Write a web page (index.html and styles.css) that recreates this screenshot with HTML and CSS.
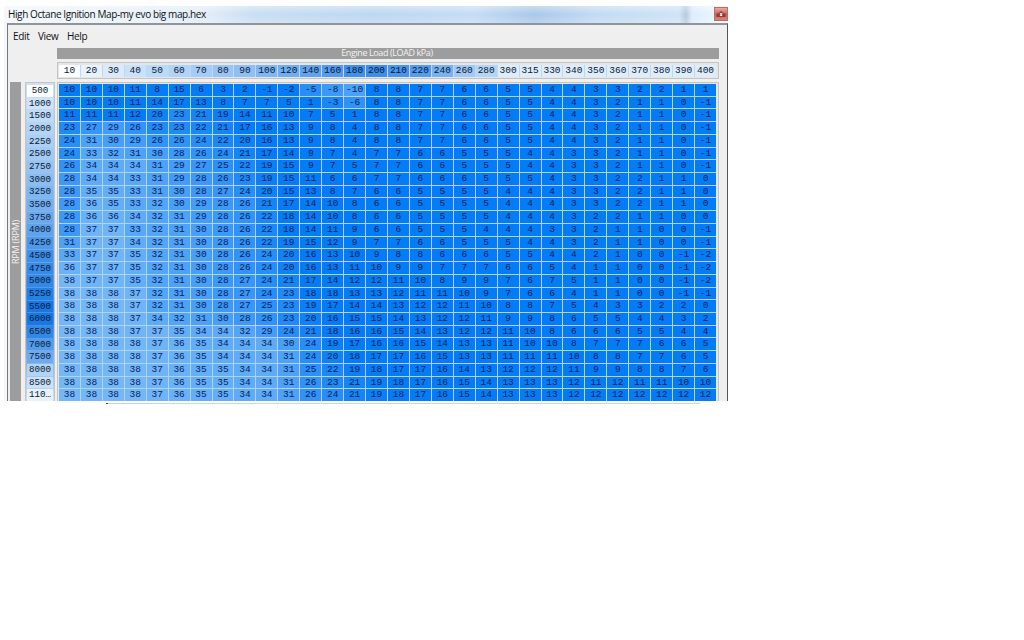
FILE: index.html
```html
<!doctype html>
<html>
<head>
	<meta charset='utf-8' />
	<title>High Octane Ignition Map</title>
	<link rel="stylesheet" href="styles.css">
</head>

<body>
	<div class='window'>
		<div class='titlebar'>
			<span class='title'>High Octane Ignition Map-my evo big map.hex</span>
			<span class='close'>
				<svg width='14' height='14' viewBox='0 0 14 14'>
					<path d='M2.500 6.500h9V10h-9z' fill='#8c3a3a'/>
					<path d='M4.500 6L7 4l2.500 2v3L7 10.500 4.500 9z' fill='#984040'/>
					<path d='M6 6.300l2.200 2.200M8.200 6.300L6 8.500' stroke='#fff' stroke-width='1.100'/>
				</svg>
			</span>
		</div>
		<div class='client'>
			<div class='menu'>
				<span class='edit'>Edit</span><span class='view'>View</span><span>Help</span>
			</div>
			<div class='load'><span>Engine Load (LOAD kPa)</span></div>
			<div class='cols'><div class='cols-in' id='cols'></div></div>
			<div class='body'>
				<div class='rpm'><span>RPM (RPM)</span></div>
				<div class='rows' id='rows'></div>
				<div class='map'><div class='cells' id='cells'></div></div>
			</div>
		</div>
	</div>
	<div class='under'></div>

	<script src="map.js"></script>
</body>
</html>
```
FILE: styles.css
```css
/*reset*/
body,div,span{margin:0;padding:0;box-sizing:border-box;}
body{background:#fff;overflow:hidden;font-family:"Open Sans","Noto Sans",sans-serif;color:#111;}

/*window*/
.window{width:724px;height:395px;margin:6px 0 0 4px;padding-left:3px;background:linear-gradient(90deg,#f4f8fb,#dfe9f1);overflow:hidden;}
.titlebar{display:flex;justify-content:space-between;height:17px;margin-left:-3px;padding-left:4px;background:linear-gradient(rgba(255,255,255,.35),rgba(255,255,255,0) 50%,rgba(255,255,255,.2)),linear-gradient(90deg,#f3f7fb 0,#e2edf8 200px,#c8def3 250px,#bdd7f2 370px,#c5dcf5 470px,#a9c8ea 530px,#c2daf3 590px,#cfe3f6 675px,#b5cadd 682px,#dcecfa 688px,#e8f5fd 710px);}
.title{font-size:10px;line-height:17px;white-space:nowrap;letter-spacing:-.4px;}
.close{width:14px;height:14px;margin-top:1px;background:linear-gradient(#e8aaa2,#d0645a 50%,#da8176);border:1px solid #b86e68;}
.close svg{display:block;margin:-1px;}

/*client area*/
.client{height:378px;border-top:2px solid #8d959b;border-left:1px solid #777;border-right:1px solid #555;background:#efefef;}
.menu{display:flex;height:23px;padding-left:5px;font-size:10px;line-height:22px;letter-spacing:-.35px;}
.edit{width:25px;}
.view{width:29px;}
.load{width:662px;height:11px;margin-left:49px;background:#9d9d9d;color:#f3f3f3;font-size:9px;line-height:10px;text-align:center;letter-spacing:-.4px;}
.load span{position:relative;left:-1px;}
.cols,.map{border:1px solid #c4c4c4;}
.cols{width:662px;height:17px;margin:3px 0 3px 49px;padding:2px 2px 1px 1px;background:#e6e6e6;}
.cols-in{display:grid;grid-template-columns:repeat(30,1fr);gap:1px;height:12px;background:#c0d8ee;}
.body{display:flex;height:319px;}
.rpm{display:flex;align-items:center;justify-content:center;width:11px;margin-left:2px;background:#9d9d9d;color:#f3f3f3;font-size:9px;letter-spacing:-.2px;}
.rpm span{writing-mode:vertical-rl;transform:rotate(180deg);line-height:11px;}
.rows{display:grid;grid-template-rows:repeat(25,1fr);gap:1px;width:30px;margin-left:4px;padding:2px 2px 0;border:solid #c4c4c4;border-width:1px 1px 0;background:linear-gradient(#cfe2f3,#5c9fe0 60%,#3d8cde 75%,#cfe2f3);}
.map{width:662px;margin-left:2px;padding:1px 2px 0 1px;border-bottom:0;background:#e6e6e6;}
.cells{display:grid;grid-template-columns:repeat(30,1fr);grid-template-rows:repeat(25,1fr);gap:1px;height:317px;background:#b3d2ee;}
.cols-in span,.rows span,.cells span{font-family:"Liberation Mono",monospace;font-size:9.5px;line-height:11.500px;text-align:center;white-space:nowrap;min-width:0;min-height:0;}
.cols-in span,.rows span{color:#0c1830;}
.rows span{font-size:9.2px;margin:0 -1px;}
.cells span{color:#0a2258;}

/*edge of the page below the window*/
.under{width:594px;height:1px;margin:2px 0 0 106px;background:#c5d4e6;border-left:2px solid #444;}
```
FILE: map.js
```js
var load = [10,20,30,40,50,60,70,80,90,100,120,140,160,180,200,210,220,240,260,280,300,315,330,340,350,360,370,380,390,400];
var rpm = ['500','1000','1500','2000','2250','2500','2750','3000','3250','3500','3750','4000','4250','4500','4750','5000','5250','5500','6000','6500','7000','7500','8000','8500','110…'];
var map = [
	'10 10 10 11 8 15 6 3 2 -1 -2 -5 -8 -10 8 8 7 7 6 6 5 5 4 4 3 3 2 2 1 1',
	'10 10 10 11 14 17 13 8 7 7 5 1 -3 -6 8 8 7 7 6 6 5 5 4 4 3 2 1 1 0 -1',
	'11 11 11 12 20 23 21 19 14 11 10 7 5 1 8 8 7 7 6 6 5 5 4 4 3 2 1 1 0 -1',
	'23 27 29 26 23 23 22 21 17 16 13 9 8 4 8 8 7 7 6 6 5 5 4 4 3 2 1 1 0 -1',
	'24 31 30 29 26 26 24 22 20 16 13 9 8 4 8 8 7 7 6 6 5 5 4 4 3 2 1 1 0 -1',
	'24 33 32 31 30 28 26 24 21 17 14 9 7 4 7 7 6 6 5 5 5 4 4 3 3 2 1 1 0 -1',
	'26 34 34 34 31 29 27 25 22 19 15 9 7 5 7 7 6 6 5 5 5 4 4 3 3 2 1 1 0 -1',
	'28 34 34 33 31 29 28 26 23 19 15 11 6 6 7 7 6 6 6 5 5 5 4 3 3 2 2 1 1 0',
	'28 35 35 33 31 30 28 27 24 20 15 13 8 7 6 6 5 5 5 5 4 4 4 3 3 2 2 1 1 0',
	'28 36 35 33 32 30 29 28 26 21 17 14 10 8 6 6 5 5 5 5 4 4 4 3 3 2 2 1 1 0',
	'28 36 36 34 32 31 29 28 26 22 18 14 10 8 6 6 5 5 5 5 4 4 4 3 2 2 1 1 0 0',
	'28 37 37 33 32 31 30 28 26 22 18 14 11 9 6 6 5 5 5 4 4 4 3 3 2 1 1 0 0 -1',
	'31 37 37 34 32 31 30 28 26 22 19 15 12 9 7 7 6 6 5 5 5 4 4 3 2 1 1 0 0 -1',
	'33 37 37 35 32 31 30 28 26 24 20 16 13 10 9 8 8 6 6 6 5 5 4 4 2 1 0 0 -1 -2',
	'36 37 37 35 32 31 30 28 26 24 20 16 13 11 10 9 9 7 7 7 6 6 5 4 1 1 0 0 -1 -2',
	'38 37 37 35 32 31 30 28 27 24 21 17 14 12 12 11 10 8 9 9 7 6 7 5 1 1 0 0 -1 -2',
	'38 38 38 37 32 31 30 28 27 24 23 18 18 13 13 12 11 11 10 9 7 6 6 4 1 1 0 0 -1 -1',
	'38 38 38 37 32 31 30 28 27 25 23 19 17 14 14 13 12 12 11 10 8 8 7 5 4 3 3 2 2 0',
	'38 38 38 37 34 32 31 30 28 26 23 20 16 15 15 14 13 12 12 11 9 9 8 6 5 5 4 4 3 2',
	'38 38 38 37 37 35 34 34 32 29 24 21 18 16 16 15 14 13 12 12 11 10 8 6 6 6 5 5 4 4',
	'38 38 38 38 37 36 35 34 34 34 30 24 19 17 16 16 15 14 13 13 11 10 10 8 7 7 7 6 6 5',
	'38 38 38 38 37 36 35 34 34 34 31 24 20 18 17 17 16 15 13 13 11 11 11 10 8 8 7 7 6 5',
	'38 38 38 38 37 36 35 35 34 34 31 25 22 19 18 17 17 16 14 13 12 12 12 11 9 9 8 8 7 6',
	'38 38 38 38 37 36 35 35 34 34 31 26 23 21 19 18 17 16 15 14 13 13 13 12 11 12 11 11 10 10',
	'38 38 38 38 37 36 35 35 34 34 31 26 24 21 19 18 17 16 15 14 13 13 13 12 12 12 12 12 12 12'
];
// 0 = full blue, 1 = white
var loadTone = [1,.97,.9,.82,.75,.7,.64,.58,.53,.46,.38,.3,.23,.14,.12,.18,.24,.42,.62,.72,.92,.92,.92,.92,.92,.92,.92,.92,.92,.92];
var rpmTone = [1,.86,.79,.74,.7,.66,.61,.56,.5,.45,.41,.36,.28,.21,.17,.15,.09,.03,.03,.15,.3,.42,.74,.84,.97];

function mix(from, t) {
	var c = from.map(function (v, i) { return Math.round(v + ([238,246,252][i] - v) * t); });
	return 'rgb(' + c.join(',') + ')';
}

function add(parent, text, color) {
	var s = document.createElement('span');
	s.textContent = text;
	s.style.background = color;
	parent.appendChild(s);
}

var cols = document.getElementById('cols');
var rows = document.getElementById('rows');
var cells = document.getElementById('cells');

load.forEach(function (v, i) { add(cols, v, i ? mix([35,128,236], loadTone[i]) : '#fcfdfe'); });
rpm.forEach(function (v, i) { add(rows, v, i ? mix([16,116,228], rpmTone[i]) : '#fcfdfe'); });

map.forEach(function (line) {
	line.split(' ').forEach(function (v) {
		var n = Number(v), t = 0;
		if (n > 18) t = (n - 18) / 20 * .48;
		if (n < -2) t = -n / 10 * .3;
		add(cells, v, mix([4,124,246], t));
	});
});
```
